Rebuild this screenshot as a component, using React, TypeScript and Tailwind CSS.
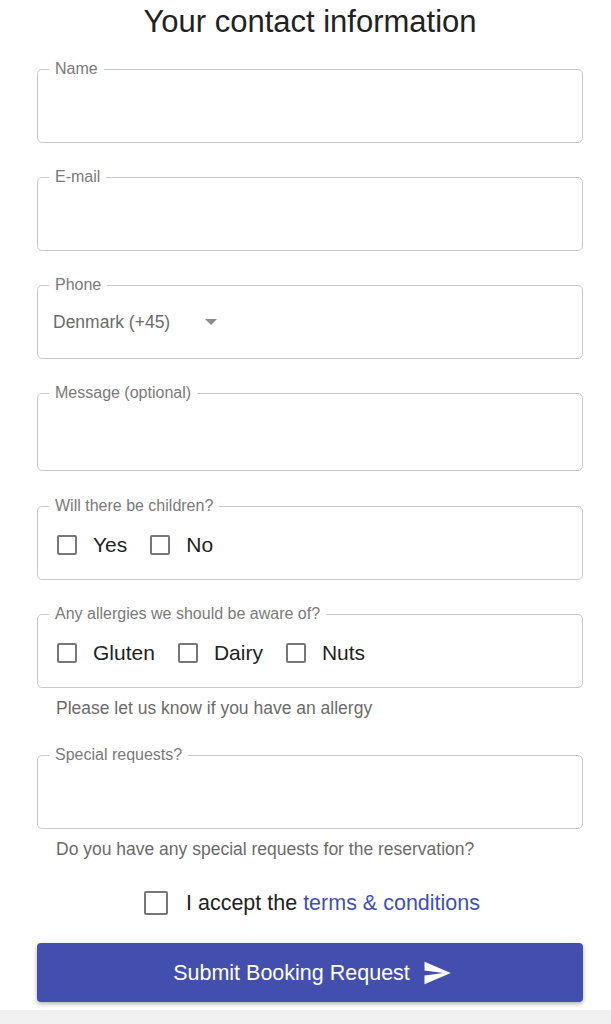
import { ReactNode } from "react";

const font = { fontFamily: '"Liberation Sans", Arial, sans-serif' };

function Field({ label, children, h = "h-[64px]" }: { label: string; children?: ReactNode; h?: string }) {
  return (
    <fieldset className="rounded-[5px] border border-[#c9c9c9]">
      <legend className="ml-[11px] px-[6px] text-[16px] leading-[18px] text-[#7a7a7a]">{label}</legend>
      <div className={h}>{children}</div>
    </fieldset>
  );
}

function Box({ size = "w-[20px] h-[20px]" }: { size?: string }) {
  return <span className={`${size} shrink-0 rounded-[2px] border-2 border-[#777]`} />;
}

function Check({ label }: { label: string }) {
  return (
    <label className="flex items-center gap-[16px]">
      <Box />
      <span className="text-[21px] leading-[24px] text-[#222]">{label}</span>
    </label>
  );
}

export default function App() {
  return (
    <div className="min-h-[1024px] bg-white" style={font}>
      <div className="pl-[37px] pr-[28px]">
        <h1 className="pt-[4px] text-center text-[31px] leading-[36px] text-[#222]">Your contact information</h1>

        <div className="mt-[20px] flex flex-col gap-[25px]">
          <Field label="Name" />
          <Field label="E-mail" />
          <Field label="Phone">
            <div className="flex items-center pl-[15px] pt-[17px]">
              <span className="text-[17.5px] leading-[22px] text-[#6b6b6b]">Denmark (+45)</span>
              <span className="ml-[35px] h-0 w-0 border-x-[6px] border-t-[6px] border-x-transparent border-t-[#8a8a8a]" />
            </div>
          </Field>
          <Field label="Message (optional)" h="h-[68px]" />
        </div>

        <div className="mt-[26px]">
          <Field label="Will there be children?">
            <div className="flex items-center gap-[23px] pl-[19px] pt-[18px]">
              <Check label="Yes" />
              <Check label="No" />
            </div>
          </Field>
        </div>

        <div className="mt-[25px]">
          <Field label="Any allergies we should be aware of?">
            <div className="flex items-center gap-[23px] pl-[19px] pt-[18px]">
              <Check label="Gluten" />
              <Check label="Dairy" />
              <Check label="Nuts" />
            </div>
          </Field>
          <p className="mt-[10px] pl-[19px] text-[17.5px] leading-[20px] text-[#6b6b6b]">Please let us know if you have an allergy</p>
        </div>

        <div className="mt-[28px]">
          <Field label="Special requests?" />
          <p className="mt-[10px] pl-[19px] text-[17.5px] leading-[20px] text-[#6b6b6b]">
            Do you have any special requests for the reservation?
          </p>
        </div>

        <label className="mt-[31px] flex items-center justify-center gap-[18px] pl-[4px]">
          <Box size="w-[24px] h-[24px]" />
          <span className="text-[21.5px] leading-[26px] text-[#222]">
            I accept the <a className="text-[#3f51b5]">terms &amp; conditions</a>
          </span>
        </label>

        <button
          type="button"
          className="mt-[27px] flex h-[59px] w-full items-center justify-center gap-[12px] rounded-[4px] bg-[#434fae] pl-[5px] text-white shadow-[0_2px_4px_rgba(0,0,0,0.3)]"
        >
          <span className="text-[21.5px] leading-[24px]">Submit Booking Request</span>
          <svg viewBox="0 0 24 24" className="h-[30px] w-[30px]" fill="currentColor">
            <path d="M2.01 21L23 12 2.01 3 2 10l15 2-15 2z" />
          </svg>
        </button>
      </div>
      <div className="mt-[8px] h-[20px] bg-[#f1f1f1]" />
    </div>
  );
}
